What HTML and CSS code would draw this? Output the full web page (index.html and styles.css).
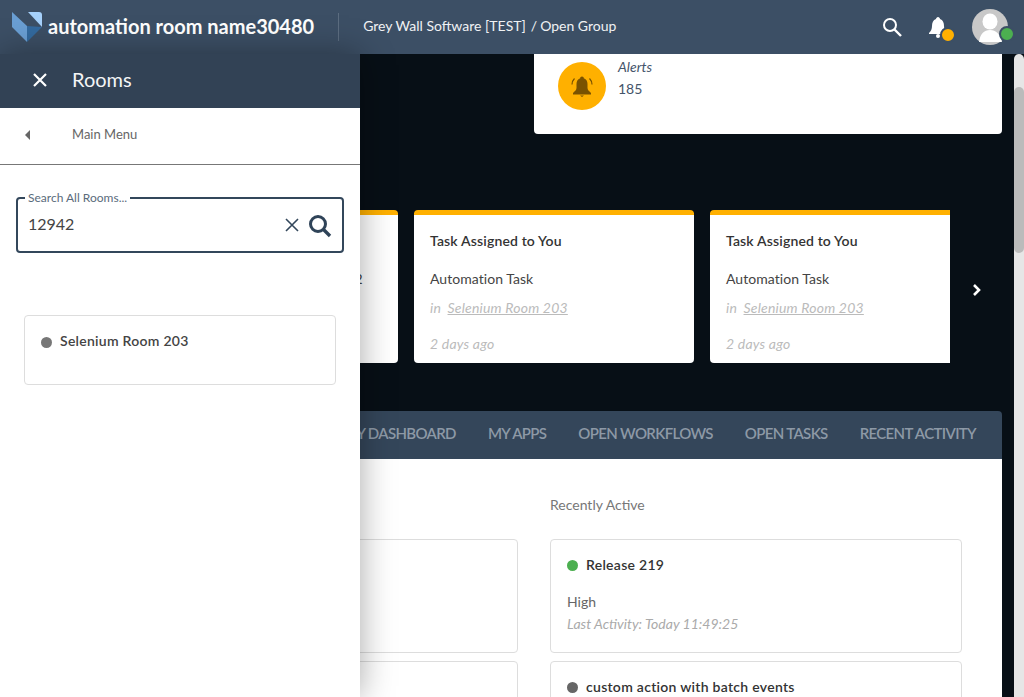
FILE: index.html
```html
<!DOCTYPE html>
<html lang="en">
<head>
  <meta charset="UTF-8" />
  <meta name="viewport" content="width=device-width, initial-scale=1.0"/>
  <title>Open Group</title>
  <link rel="stylesheet" href="styles.css">
</head>
<body>

  <header class="topbar">
    <svg class="logo" width="32" height="32" viewBox="0 0 32 32">
      <path d="M1 1 L16 15 V31 L1 16 Z" fill="#6a9fd4"/>
      <path d="M17 1 H28 Q31 1 31 4 V16 Z" fill="#a6d1fb"/>
      <path d="M16 15 L31 16 L16 31 Z" fill="#336a9f"/>
    </svg>
    <div class="room-name">automation room name30480</div>
    <div class="crumbs">Grey Wall Software [TEST]<span class="crumb-sep">/</span>Open Group</div>
    <div class="top-icons">
      <svg class="top-search" width="22" height="22" viewBox="0 0 22 22" fill="none" stroke="#fff">
        <circle cx="9" cy="9" r="6" stroke-width="2"/>
        <path d="M13.5 13.5 L20 20" stroke-width="2.4"/>
      </svg>
      <div class="top-bell">
        <svg width="20" height="22" viewBox="0 0 20 22" fill="#fff">
          <path d="M10 1 C11 1 12 2 12 3 C15 4 16 7 16 10 C16 13 17 15 19 17 V18 H1 V17 C3 15 4 13 4 10 C4 7 5 4 8 3 C8 2 9 1 10 1 Z"/>
          <circle cx="10" cy="20" r="2"/>
        </svg>
        <span class="bell-dot"></span>
      </div>
      <div class="avatar">
        <svg width="36" height="36" viewBox="0 0 36 36">
          <circle cx="18" cy="18" r="18" fill="#c8c8c8"/>
          <ellipse cx="18" cy="12.500" rx="7.500" ry="8" fill="#fff"/>
          <path d="M7 33 C8 25 12 21 18 21 C24 21 28 25 30 33 Z" fill="#fff"/>
        </svg>
        <span class="avatar-dot"></span>
      </div>
    </div>
  </header>

  <div class="page">
    <main class="content">
      <section class="stat-row">
        <div class="stat-card">
          <div class="stat-icon">
            <svg width="24" height="24" viewBox="0 0 24 24" fill="#7a5200">
              <path d="M12 2.500 C13.200 2.500 13.800 3.300 13.800 4.200 C16.500 5 17.500 7.500 17.500 10 V14 C17.500 16 19.500 17.500 21 19 V20.500 H3 V19 C4.500 17.500 6.500 16 6.500 14 V10 C6.500 7.500 7.500 5 10.200 4.200 C10.200 3.300 10.800 2.500 12 2.500 Z"/>
              <path d="M10 21.500 H14 L12 23 Z"/>
              <path d="M2 10.500 C2 8 3 6 4.500 4.500 M22 10.500 C22 8 21 6 19.500 4.500" fill="none" stroke="#7a5200" stroke-width="1.200"/>
            </svg>
          </div>
          <div class="stat-text">
            <div class="stat-label">Alerts</div>
            <div class="stat-value">185</div>
          </div>
        </div>
      </section>

      <section class="carousel">
        <div class="task-track">
          <div class="task-card">
            <div class="task-title">Task Assigned to You</div>
            <div class="task-name">Automation Task for Selenium QA1 2</div>
          </div>
          <div class="task-card">
            <div class="task-title">Task Assigned to You</div>
            <div class="task-name">Automation Task</div>
            <div class="task-room">in <a>Selenium Room 203</a></div>
            <div class="task-time">2 days ago</div>
          </div>
          <div class="task-card">
            <div class="task-title">Task Assigned to You</div>
            <div class="task-name">Automation Task</div>
            <div class="task-room">in <a>Selenium Room 203</a></div>
            <div class="task-time">2 days ago</div>
          </div>
        </div>
        <svg class="next-arrow" width="10" height="14" viewBox="0 0 10 14" fill="none" stroke="#fff" stroke-width="2.600">
          <path d="M2 2 L7 7 L2 12"/>
        </svg>
      </section>

      <nav class="tabs">
        <span>MY DASHBOARD</span>
        <span>MY APPS</span>
        <span>OPEN WORKFLOWS</span>
        <span>OPEN TASKS</span>
        <span>RECENT ACTIVITY</span>
      </nav>

      <section class="panel">
        <div class="panel-col">
          <h2 class="col-title">Favorites</h2>
          <div class="room-card"></div>
          <div class="room-card"></div>
        </div>
        <div class="panel-col">
          <h2 class="col-title">Recently Active</h2>
          <div class="room-card">
            <div class="room-title"><span class="dot dot-green"></span>Release 219</div>
            <div class="room-level">High</div>
            <div class="room-activity">Last Activity: Today 11:49:25</div>
          </div>
          <div class="room-card">
            <div class="room-title"><span class="dot dot-grey"></span>custom action with batch events</div>
          </div>
        </div>
      </section>
    </main>
    <div class="scrollbar"><div class="scroll-thumb"></div></div>
  </div>

  <aside class="drawer">
    <div class="drawer-head">
      <svg width="16" height="16" viewBox="0 0 16 16" stroke="#fff" stroke-width="2.200">
        <path d="M2 2 L14 14 M14 2 L2 14"/>
      </svg>
      <span>Rooms</span>
    </div>
    <div class="drawer-back">
      <span class="back-arrow"></span>
      <span class="back-label">Main Menu</span>
    </div>
    <div class="drawer-search">
      <fieldset class="search-box">
        <legend>Search All Rooms...</legend>
        <span class="search-value">12942</span>
        <svg class="search-clear" width="16" height="16" viewBox="0 0 16 16" stroke="#33475b" stroke-width="1.600">
          <path d="M2 2 L14 14 M14 2 L2 14"/>
        </svg>
        <svg class="search-go" width="24" height="24" viewBox="0 0 24 24" fill="none" stroke="#2f4358">
          <circle cx="10" cy="10" r="7.500" stroke-width="3"/>
          <path d="M15.500 15.500 L22 22" stroke-width="3.400"/>
        </svg>
      </fieldset>
    </div>
    <div class="drawer-result">
      <div class="result-card">
        <span class="dot dot-mid"></span>Selenium Room 203
      </div>
    </div>
  </aside>

</body>
</html>
```

FILE: styles.css
```css
* {
  box-sizing: border-box;
}

html, body {
  height: 100%;
}

body {
  margin: 0;
  overflow: hidden;
  background-color: #070f16;
  color: #333;
  font-family: Lato, "Open Sans", sans-serif;
  font-size: 14px;
}

.topbar {
  display: flex;
  align-items: center;
  height: 54px;
  padding: 0 16px 0 11px;
  background-color: #3c4f65;
  color: #fff;
}

.logo {
  flex: none;
}

.room-name {
  margin: 0 0 2px 5px;
  padding-right: 24px;
  font-size: 20px;
  font-weight: 700;
  white-space: nowrap;
}

.crumbs {
  padding: 0 0 2px 24px;
  border-left: 1px solid #5c6d80;
  line-height: 26px;
  color: #f0f2f4;
}

.crumb-sep {
  margin: 0 3px 0 5px;
}

.top-icons {
  display: flex;
  align-items: center;
  margin-left: auto;
}

.top-search {
  margin-right: 25px;
}

.top-bell {
  position: relative;
  height: 22px;
  margin-right: 24px;
}

.bell-dot {
  position: absolute;
  right: -8px;
  bottom: -5px;
  width: 16px;
  height: 16px;
  border: 2px solid #3c4f65;
  border-radius: 50%;
  background-color: #ffb000;
}

.avatar {
  position: relative;
  height: 36px;
}

.avatar-dot {
  position: absolute;
  right: -7px;
  bottom: 3px;
  width: 16px;
  height: 16px;
  border: 2px solid #3c4f65;
  border-radius: 50%;
  background-color: #4caf50;
}

.page {
  display: flex;
  height: 643px;
  overflow: hidden;
}

.content {
  flex: 1;
  min-width: 0;
  padding: 0 12px;
}

.scrollbar {
  flex: none;
  width: 10px;
  padding-top: 33px;
  background-color: #e6e6e6;
  border-radius: 5px 5px 0 0;
}

.scroll-thumb {
  height: 166px;
  border-radius: 5px;
  background-color: #bbb;
}

.stat-row {
  display: flex;
  justify-content: flex-end;
}

.stat-card {
  display: flex;
  gap: 12px;
  width: 468px;
  height: 80px;
  padding: 8px 24px;
  background-color: #fff;
  border-radius: 0 0 4px 4px;
}

.stat-icon {
  display: flex;
  align-items: center;
  justify-content: center;
  width: 48px;
  height: 48px;
  border-radius: 50%;
  background-color: #ffb000;
}

.stat-text {
  margin-top: -4px;
}

.stat-label {
  font-style: italic;
  color: #44546a;
  line-height: 18px;
}

.stat-value {
  margin-top: 4px;
  color: #44546a;
  line-height: 18px;
}

.carousel {
  display: flex;
  align-items: center;
  margin-top: 76px;
}

.task-track {
  display: flex;
  justify-content: flex-end;
  gap: 16px;
  flex: none;
  width: 938px;
  overflow: hidden;
}

.task-card {
  flex: none;
  width: 280px;
  height: 153px;
  padding: 17px 16px 0;
  background-color: #fff;
  border-top: 5px solid #ffb000;
  border-radius: 4px;
}

.task-card:last-child {
  margin-right: -40px;
}

.task-title {
  font-weight: 600;
  line-height: 18px;
  letter-spacing: 0.15px;
  white-space: nowrap;
}

.task-name {
  margin-top: 20px;
  line-height: 18px;
  color: #444;
  white-space: nowrap;
  letter-spacing: 0.05px;
}

.task-room {
  margin-top: 11px;
  line-height: 18px;
  font-style: italic;
  color: #bbb;
  letter-spacing: 0.2px;
}

.task-room a {
  margin-left: 3px;
  text-decoration: underline;
}

.task-time {
  margin-top: 18px;
  line-height: 18px;
  font-style: italic;
  color: #bbb;
  letter-spacing: 0.2px;
}

.next-arrow {
  margin: 6px 0 0 22px;
}

.tabs {
  display: flex;
  justify-content: flex-end;
  align-items: center;
  gap: 32px;
  height: 48px;
  margin-top: 48px;
  padding: 0 26px 4px 0;
  background-color: #34465a;
  border-radius: 4px 4px 0 0;
  color: #8d99a6;
  font-size: 15px;
  font-weight: 600;
  letter-spacing: -0.65px;
  white-space: nowrap;
}

.panel {
  display: grid;
  grid-template-columns: 412px 412px;
  justify-content: end;
  gap: 32px;
  min-height: 300px;
  padding: 37px 40px 0 0;
  background-color: #fff;
}

.col-title {
  margin: 0 0 25px;
  font-size: 14px;
  font-weight: 400;
  line-height: 18px;
  color: #777;
}

.room-card {
  height: 114px;
  margin-bottom: 8px;
  padding: 16px;
  border: 1px solid #ddd;
  border-radius: 4px;
}

.room-title {
  display: flex;
  align-items: center;
  font-weight: 600;
  line-height: 18px;
  letter-spacing: 0.28px;
  color: #333;
  white-space: nowrap;
}

.dot {
  flex: none;
  display: inline-block;
  width: 11px;
  height: 11px;
  margin-right: 8px;
  border-radius: 50%;
}

.dot-green {
  background-color: #4caf50;
}

.dot-grey {
  background-color: #666;
}

.dot-mid {
  background-color: #777;
}

.room-level {
  margin-top: 19px;
  line-height: 18px;
  color: #666;
}

.room-activity {
  margin-top: 4px;
  line-height: 18px;
  font-style: italic;
  color: #aaa;
}

/* slides over the page */
.drawer {
  position: absolute;
  top: 54px;
  bottom: 0;
  left: 0;
  width: 360px;
  background-color: #fff;
  box-shadow: 0 0 32px rgba(0, 0, 0, 0.35);
}

.drawer-head {
  display: flex;
  align-items: center;
  gap: 24px;
  height: 54px;
  padding: 0 0 2px 32px;
  background-color: #324255;
  color: #f4f5f6;
  font-size: 20px;
}

.drawer-head span {
  margin-bottom: 2px;
}

.drawer-back {
  display: flex;
  align-items: center;
  gap: 42px;
  height: 57px;
  padding: 0 0 2px 25px;
  border-bottom: 1px solid #777;
  color: #666;
  font-size: 13px;
}

.back-label {
  margin-bottom: 2px;
}

.back-arrow {
  width: 0;
  height: 0;
  border-top: 5px solid transparent;
  border-bottom: 5px solid transparent;
  border-right: 5px solid #666;
}

.drawer-search {
  padding: 25px 16px 0;
}

.search-box {
  display: flex;
  align-items: center;
  height: 63px;
  margin: 0;
  padding: 0 10px 10px 10px;
  border: 2px solid #33475b;
  border-radius: 4px;
}

.search-box legend {
  margin-left: -3px;
  padding: 1px 3px;
  font-size: 12px;
  line-height: 14px;
  color: #5a6b7c;
}

.search-value {
  flex: 1;
  font-size: 16px;
  color: #444;
}

.search-clear {
  margin-top: 2px;
}

.search-go {
  margin: 4px 0 0 8px;
}

.drawer-result {
  padding: 62px 24px 0;
}

.result-card {
  display: flex;
  align-items: flex-start;
  height: 70px;
  padding: 16px;
  border: 1px solid #ddd;
  border-radius: 4px;
  font-weight: 600;
  line-height: 18px;
  letter-spacing: 0.27px;
  color: #444;
}

.result-card .dot {
  margin-top: 5px;
}
```
